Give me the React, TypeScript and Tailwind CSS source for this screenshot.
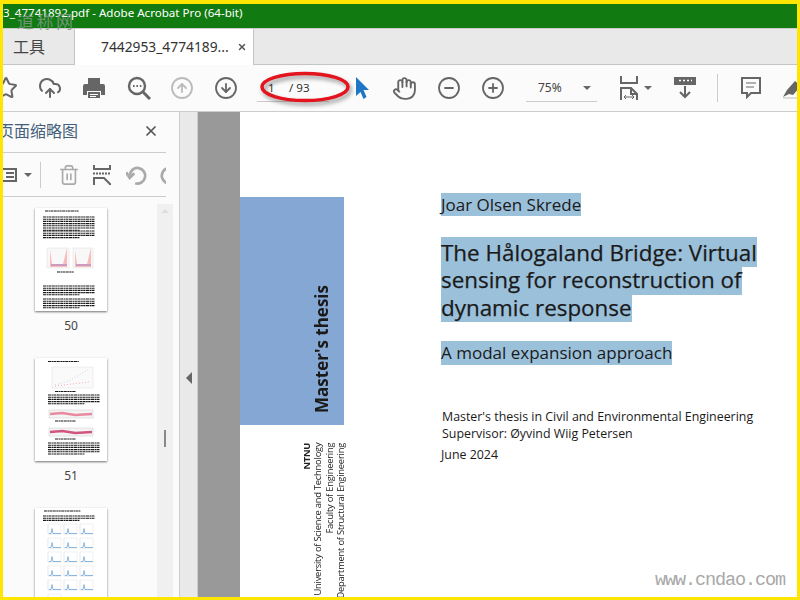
import React from 'react';
import { CircleArrowDown, CircleArrowUp, CircleMinus, CirclePlus, CloudUpload, Hand, Star, Trash2, X } from 'lucide-react';

const ui = { fontFamily: '"Noto Sans", "Noto Sans CJK SC", sans-serif' };
const doc = { fontFamily: '"Open Sans", sans-serif' };

function Caret() {
  return <div className="h-0 w-0 border-x-[4px] border-t-[4px] border-x-transparent border-t-[#666]" />;
}

function PrintIcon() {
  return (
    <svg width="24" height="24" viewBox="0 0 24 24" className="fill-[#666]">
      <path d="M6 2h12v6H6zM3 8h18a2 2 0 0 1 2 2v9h-4v-4H5v4H1v-9a2 2 0 0 1 2-2z" />
      <path d="M6 16h12v6H6z" />
      <path d="M8 18h8v1H8zM8 20h6v1H8z" className="fill-white" />
    </svg>
  );
}

function SearchDots() {
  return (
    <svg width="24" height="24" viewBox="0 0 24 24" fill="none" stroke="#666" strokeWidth="2.4">
      <circle cx="10" cy="10" r="8" />
      <path d="M16 16l7 7" strokeWidth="3" />
      <path d="M6 10h1.6M9.4 10H11M12.8 10h1.6" strokeWidth="2" />
    </svg>
  );
}

function FitWidth() {
  return (
    <svg width="18" height="24" viewBox="0 0 18 24" fill="none" stroke="#666" strokeWidth="2">
      <path d="M1 0v7h16V0" />
      <path d="M1 24V12h10l6 6v6" />
      <path d="M11 12v6h6" />
      <path d="M4 21h10M4 21l2-2M4 21l2 2M14 21l-2-2M14 21l-2 2" strokeWidth="1" />
    </svg>
  );
}

function ScrollDown() {
  return (
    <svg width="22" height="22" viewBox="0 0 22 22" fill="none" stroke="#666" strokeWidth="2">
      <path d="M1 1h20v6H1z" fill="#666" />
      <path d="M5 3.500h2M9 3.500h2M13 3.500h2M17 3.500h1" stroke="white" strokeWidth="1.500" />
      <path d="M11 9v11M6 15l5 5 5-5" />
    </svg>
  );
}

function CommentIcon() {
  return (
    <svg width="22" height="22" viewBox="0 0 22 22" fill="none" stroke="#666" strokeWidth="2">
      <path d="M2 1h18v15h-9l-4 4v-4H2z" />
      <path d="M6 6h10M6 10h8" strokeWidth="1" />
    </svg>
  );
}

function PenIcon() {
  return (
    <svg width="18" height="22" viewBox="0 0 18 22" className="fill-[#666]">
      <path d="M0 20l4-7 8-9 6 5-8 9-4-1z" />
      <path d="M0 20h18v2H0z" className="fill-[#ddd]" />
    </svg>
  );
}

function Cursor() {
  return (
    <svg width="14" height="22" viewBox="0 0 14 22" className="fill-[#1f76c4]">
      <path d="M1 0l13 13H8.500l3 7-3 2-3-7L1 19z" />
    </svg>
  );
}

function ExtractIcon() {
  return (
    <svg width="18" height="20" viewBox="0 0 18 20" fill="none" stroke="#666" strokeWidth="2">
      <path d="M1 0v4h16V0M1 20v-7h10l6 6v1" />
      <path d="M0 8.500h18" strokeDasharray="2 1" strokeWidth="2" />
    </svg>
  );
}

function UndoIcon() {
  return (
    <svg width="22" height="22" viewBox="0 0 24 24" fill="none" stroke="#aaa" strokeWidth="3">
      <path d="M10 21a8.500 8.500 0 1 0-6-9" />
      <path d="M0 9l4 6 5-5" />
    </svg>
  );
}

function RedoIcon() {
  return (
    <svg width="22" height="22" viewBox="0 0 24 24" fill="none" stroke="#aaa" strokeWidth="3">
      <path d="M14 21a8.500 8.500 0 1 1 6-9" />
      <path d="M24 9l-4 6-5-5" />
    </svg>
  );
}

function TextLines({ y, rows, x = 6, w = 60 }: { y: number; rows: number; x?: number; w?: number }) {
  return (
    <>
      {Array.from({ length: rows }).map((_, i) => (
        <path
          key={i}
          d={`M${x} ${y + i * 2.2}h${i === rows - 1 ? w * 0.7 : w}`}
          stroke="#1a1a1a"
          strokeWidth="1.100"
          strokeDasharray="3.200 0.500 1.700 0.400 2.300 0.500"
        />
      ))}
    </>
  );
}

function Chart({ x, y, w, h, tone }: { x: number; y: number; w: number; h: number; tone: string }) {
  return (
    <g>
      <rect x={x} y={y} width={w} height={h} fill="#f4f4f4" stroke="#ccc" strokeWidth="0.5" />
      <path d={`M${x + 1} ${y + h / 2}L${x + w * 0.3} ${y + h / 2 - 1}L${x + w * 0.6} ${y + h / 2 + 1}L${x + w - 1} ${y + h / 2}`} stroke={tone} strokeWidth="2.500" fill="none" />
    </g>
  );
}

function SpikeChart({ x, y }: { x: number; y: number }) {
  return (
    <g fill="none">
      <path d={`M${x} ${y}v10h13`} stroke="#ccc" strokeWidth="0.500" />
      <path d={`M${x} ${y}h13v10`} stroke="#e2e2e2" strokeWidth="0.500" />
      <path d={`M${x + 1} ${y + 9.500}h2l1-5 1 5h8`} stroke="#6fa8dc" strokeWidth="0.800" />
    </g>
  );
}

function Thumb50() {
  return (
    <svg width="72" height="103" viewBox="0 0 72 103" className="block">
      <TextLines y={3} rows={1} x={10} w={48} />
      <TextLines y={9} rows={7} x={8} w={52} />
      <TextLines y={23} rows={4} x={8} w={52} />
      <path d="M12 40h22v20H12zM38 40h20v20H38z" fill="#f8f8f8" stroke="#ddd" strokeWidth="0.5" />
      <path d="M15 42l2 14h11l4-16v19H15zM40 42l2 14h10l4-16v19H40z" fill="#f8bcbc" />
      <path d="M16 57h16M41 57h15" stroke="#8a6ac0" strokeWidth="0.800" />
      <TextLines y={64} rows={1} x={22} w={24} />
      <TextLines y={78} rows={5} x={8} w={52} />
      <TextLines y={91} rows={5} x={8} w={52} />
    </svg>
  );
}

function Thumb51() {
  return (
    <svg width="72" height="103" viewBox="0 0 72 103" className="block">
      <TextLines y={3.500} rows={1} x={13} w={44} />
      <rect x="17" y="9" width="41" height="21" fill="#fafafa" stroke="#ddd" strokeWidth="0.5" />
      <path d="M20 27l14-4 20-12" stroke="#c8d4e8" strokeWidth="1" fill="none" strokeDasharray="1 2" />
      <path d="M20 28l34-4" stroke="#f4b0b0" strokeWidth="1" strokeDasharray="1 2" />
      <TextLines y={33.500} rows={1} x={20} w={30} />
      <TextLines y={37} rows={5} x={13} w={52} />
      <Chart x={14} y={52} w={44} h={8} tone="#e88aa0" />
      <TextLines y={63} rows={1} x={20} w={30} />
      <Chart x={14} y={70} w={44} h={8} tone="#d2557f" />
      <TextLines y={81} rows={1} x={20} w={30} />
      <TextLines y={85} rows={6} x={13} w={52} />
    </svg>
  );
}

function Thumb52() {
  const cells = [];
  for (let r = 0; r < 5; r++) {
    for (let c = 0; c < 3; c++) {
      cells.push(<SpikeChart key={`${r}-${c}`} x={13 + c * 16} y={16 + r * 14} />);
    }
  }
  return (
    <svg width="72" height="90" viewBox="0 0 72 90" className="block">
      <TextLines y={3} rows={1} x={9} w={52} />
      <TextLines y={8} rows={3} x={8} w={52} />
      {cells}
      <SpikeChart x={13} y={86} />
    </svg>
  );
}

function Thumbnail({ label, children }: { label?: string; children: React.ReactNode }) {
  return (
    <div className="flex w-[72px] flex-col items-center">
      <div className="bg-white shadow-[0_1px_2px_rgba(0,0,0,0.55)]">{children}</div>
      {label && <div className="mt-[7px] text-[12px] leading-[16px] text-[#444]">{label}</div>}
    </div>
  );
}

function Highlight({ children, className }: { children: React.ReactNode; className: string }) {
  return <div className={`w-fit bg-[#9bc0da] text-[#1a1a1a] ${className}`}>{children}</div>;
}

export default function App() {
  return (
    <div className="relative flex h-[600px] w-[800px] flex-col overflow-hidden border-[3px] border-t-[4px] border-[#ffe600] bg-white" style={ui}>
      <div className="flex h-[24px] items-start bg-[#117a11] text-[11.600px] leading-[18px] text-white">
        <span className="whitespace-nowrap">3_47741892.pdf - Adobe Acrobat Pro (64-bit)</span>
      </div>

      <div className="flex h-[37px] border-y border-t-[#ccc] border-b-[#c4c4c4] bg-[#e9e9e9]">
        <div className="flex w-[71px] items-center pl-[10px] text-[16px] text-[#444]">工具</div>
        <div className="-mb-px flex w-[180px] items-center border-x border-x-[#c4c4c4] bg-white pl-[26px] text-[13.800px] text-[#333]">
          <span>7442953_4774189...</span>
          <X className="ml-[8px] size-[10px] text-[#555]" strokeWidth={3.500} />
        </div>
      </div>

      <div className="flex h-[47px] items-center overflow-hidden border-b border-[#ccc] bg-[#fbfbfb] [&>*]:shrink-0">
        <Star className="ml-[-9px] size-[24px] text-[#666]" strokeWidth={2} />
        <CloudUpload className="ml-[20px] size-[24px] text-[#666]" strokeWidth={2} />
        <div className="ml-[20px]"><PrintIcon /></div>
        <div className="ml-[21px]"><SearchDots /></div>
        <CircleArrowUp className="ml-[19px] size-[24px] text-[#bbb]" strokeWidth={1.800} />
        <CircleArrowDown className="ml-[20px] size-[24px] text-[#666]" strokeWidth={1.800} />
        <div className="ml-[19px] flex h-[27px] w-[72px] items-center border-b border-[#ccc] pl-[11px] text-[11.600px] text-[#333]">
          <span className="w-[21px]">1</span>
          <span>/ 93</span>
        </div>
        <div className="ml-[26px]"><Cursor /></div>
        <Hand className="ml-[23px] size-[25px] text-[#666]" strokeWidth={1.800} />
        <CircleMinus className="ml-[20px] size-[24px] text-[#666]" strokeWidth={1.800} />
        <CirclePlus className="ml-[20px] size-[24px] text-[#666]" strokeWidth={1.800} />
        <div className="ml-[21px] flex h-[27px] w-[71px] items-center justify-between border-b border-[#ccc] pl-[12px] pr-[6px] text-[12px] text-[#444]">
          <span>75%</span>
          <Caret />
        </div>
        <div className="ml-[23px]"><FitWidth /></div>
        <div className="ml-[6px]"><Caret /></div>
        <div className="ml-[22px]"><ScrollDown /></div>
        <div className="ml-[21px] h-[28px] w-px bg-[#ccc]" />
        <div className="ml-[22px]"><CommentIcon /></div>
        <div className="ml-[21px]"><PenIcon /></div>
      </div>

      <div className="flex min-h-0 flex-1">
        <div className="flex w-[176px] shrink-0 flex-col overflow-hidden bg-[#fbfbfb]">
          <div className="flex h-[40px] items-center pb-[2px] pr-[20px] text-[16px] text-[#44607a]">
            <span className="-ml-[5px] flex-1 whitespace-nowrap">页面缩略图</span>
            <X className="size-[16px] text-[#555]" strokeWidth={2.600} />
          </div>
          <div className="mr-[13px] flex h-[45px] items-center overflow-hidden border-y border-[#ccc]">
            <div className="flex h-[14px] w-[14px] shrink-0 flex-col justify-center gap-[2px] border-2 border-l-0 border-[#666] pl-[3px]">
              <div className="h-[2px] w-[8px] bg-[#666]" />
              <div className="h-[2px] w-[8px] bg-[#666]" />
            </div>
            <div className="ml-[7px] shrink-0"><Caret /></div>
            <div className="ml-[8px] h-[26px] w-px shrink-0 bg-[#ccc]" />
            <Trash2 className="ml-[17px] size-[22px] shrink-0 text-[#aaa]" strokeWidth={1.800} />
            <div className="ml-[13px] shrink-0"><ExtractIcon /></div>
            <div className="ml-[15px] shrink-0"><UndoIcon /></div>
            <div className="ml-[11px] shrink-0"><RedoIcon /></div>
          </div>
          <div className="flex min-h-0 flex-1 overflow-hidden">
            <div className="flex flex-1 flex-col items-center gap-[24px] pr-[18px] pt-[11px]">
              <Thumbnail label="50"><Thumb50 /></Thumbnail>
              <Thumbnail label="51"><Thumb51 /></Thumbnail>
              <Thumbnail><Thumb52 /></Thumbnail>
            </div>
            <div className="mr-[6px] mt-[7px] flex w-[16px] flex-col items-center bg-[#f0f0f0]">
              <div className="mt-[5px] h-0 w-0 border-x-[4px] border-b-[4px] border-x-transparent border-b-[#ddd]" />
              <div className="mt-[217px] h-[17px] w-[2px] bg-[#888]" />
            </div>
          </div>
        </div>

        <div className="flex w-[19px] shrink-0 items-center justify-center border-x border-x-[#ccc] bg-[#e9e9e9] pt-[46px]">
          <div className="h-0 w-0 border-y-[6px] border-r-[6px] border-y-transparent border-r-[#666]" />
        </div>
        <div className="w-[42px] shrink-0 bg-[#999]" />

        <div className="flex min-w-0 flex-1 overflow-hidden bg-white">
          <div className="w-[201px] shrink-0 pt-[85px]">
            <div className="flex h-[228px] w-[104px] bg-[#84a7d3]">
              <div className="mb-[12px] ml-[72px] rotate-180 self-end text-[17px] font-bold leading-[20px] text-[#1a1a1a] [writing-mode:vertical-rl]" style={doc}>
                Master's thesis
              </div>
            </div>
            <div className="ml-[61px] mt-[18px] w-fit rotate-180 whitespace-nowrap text-right text-[9.300px] leading-[11.300px] tracking-[-0.2px] text-[#222] [writing-mode:vertical-rl]" style={doc}>
              <div className="font-bold">NTNU</div>
              <div>University of Science and Technology</div>
              <div>Faculty of Engineering</div>
              <div>Department of Structural Engineering</div>
            </div>
          </div>

          <div className="whitespace-nowrap pt-[81px]" style={doc}>
            <Highlight className="text-[17px] leading-[23px]">Joar Olsen Skrede</Highlight>
            <div className="mt-[21px] text-[22.400px] font-medium [-webkit-text-stroke:0.25px_#1a1a1a]">
              <Highlight className="h-[30px] leading-[31px]">The Hålogaland Bridge: Virtual</Highlight>
              <Highlight className="h-[28px] leading-[25px]">sensing for reconstruction of</Highlight>
              <Highlight className="h-[27px] leading-[25px]">dynamic response</Highlight>
            </div>
            <Highlight className="mt-[19px] text-[17px] leading-[24px]">A modal expansion approach</Highlight>
            <div className="ml-px mt-[43px] text-[12.400px] leading-[17px] text-[#1a1a1a]">Master's thesis in Civil and Environmental Engineering</div>
            <div className="ml-px text-[12.400px] leading-[17px] text-[#1a1a1a]">Supervisor: Øyvind Wiig Petersen</div>
            <div className="mt-[4px] text-[12.400px] leading-[17px] text-[#1a1a1a]">June 2024</div>
          </div>
        </div>
      </div>

      {/* red marker ring drawn on top of the screenshot */}
      <svg className="absolute left-[255px] top-[64px] drop-shadow-[2px_3px_2px_rgba(0,0,0,0.4)]" width="96" height="36" viewBox="0 0 96 36" fill="none">
        <ellipse cx="47" cy="19" rx="43" ry="13.500" stroke="#e4141f" strokeWidth="3.500" />
      </svg>
      <div className="absolute left-[14px] top-[7px] text-[17px] leading-[20px] tracking-[2.500px] text-[#7f9a86]/85" style={{ fontFamily: '"Noto Sans CJK SC", serif' }}>道称网</div>
      <div className="absolute bottom-[2px] right-[12px] text-[18.500px] tracking-[-1.100px] text-[#a8a8a8]" style={{ fontFamily: '"Liberation Mono", monospace' }}>www.cndao.com</div>
    </div>
  );
}
